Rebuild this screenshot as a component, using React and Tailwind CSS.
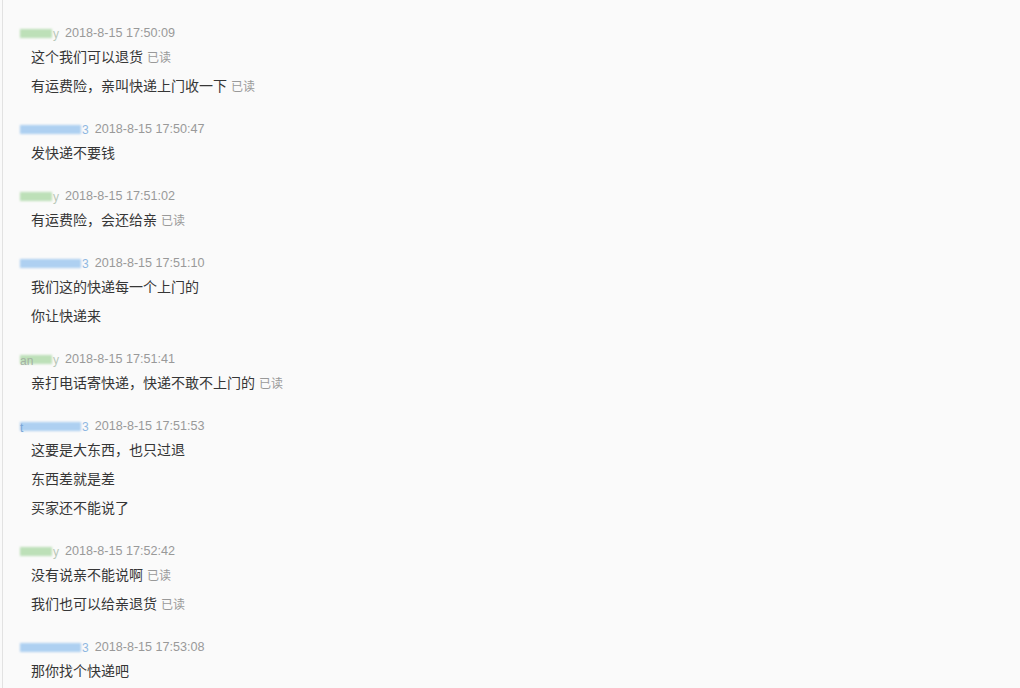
import React from "react";

const groups = [
  { who: "g", tail: "y", time: "2018-8-15 17:50:09", msgs: [["这个我们可以退货", true], ["有运费险，亲叫快递上门收一下", true]] },
  { who: "b", tail: "3", time: "2018-8-15 17:50:47", msgs: [["发快递不要钱", false]] },
  { who: "g", tail: "y", time: "2018-8-15 17:51:02", msgs: [["有运费险，会还给亲", true]] },
  { who: "b", tail: "3", time: "2018-8-15 17:51:10", msgs: [["我们这的快递每一个上门的", false], ["你让快递来", false]] },
  { who: "g", tail: "y", head: "an", time: "2018-8-15 17:51:41", msgs: [["亲打电话寄快递，快递不敢不上门的", true]] },
  { who: "b", tail: "3", head: "t", time: "2018-8-15 17:51:53", msgs: [["这要是大东西，也只过退", false], ["东西差就是差", false], ["买家还不能说了", false]] },
  { who: "g", tail: "y", time: "2018-8-15 17:52:42", msgs: [["没有说亲不能说啊", true], ["我们也可以给亲退货", true]] },
  { who: "b", tail: "3", time: "2018-8-15 17:53:08", msgs: [["那你找个快递吧", false]] },
];

const BlurName = ({ who, tail, head }) => {
  const green = who === "g";
  return (
    <div className="relative flex items-center h-[21px]">
      <div
        className={
          green
            ? "w-[32px] h-[9px] bg-[#bde0b8] blur-[1px]"
            : "w-[61px] h-[9px] bg-[#aed0f1] blur-[1px]"
        }
      />
      {head && (
        <span
          className={
            green
              ? "absolute left-0 top-[3px] text-[12px] text-[#a3b0a3] font-['Liberation_Sans',sans-serif]"
              : "absolute left-0 top-[3px] text-[12px] text-[#7aa6d6] font-['Liberation_Sans',sans-serif]"
          }
        >
          {head}
        </span>
      )}
      <span
        className={
          green
            ? "ml-[1px] text-[12px] text-[#b8c8b8] font-['Liberation_Sans',sans-serif]"
            : "ml-[1px] text-[12px] text-[#8fb8e2] font-['Liberation_Sans',sans-serif]"
        }
      >
        {tail}
      </span>
    </div>
  );
};

const App = () => {
  return (
    <div className="h-[688px] bg-[#fafafa] pl-[2px] overflow-hidden">
      <div className="h-full border-l border-[#e2e2e2] pt-[22px]">
        {groups.map((g, i) => (
          <div key={i} className="mb-[17px]">
            <div className="h-[21px] flex items-center pl-[17px] pt-[2px]">
              <BlurName who={g.who} tail={g.tail} head={g.head} />
              <span className="ml-[6px] text-[12.6px] text-[#999999] font-['Liberation_Sans',sans-serif]">
                {g.time}
              </span>
            </div>
            {g.msgs.map(([text, read], j) => (
              <div
                key={j}
                className="h-[29px] flex items-center pl-[28px] pb-[2px] text-[14px] text-[#363636] font-['Noto_Sans_CJK_SC',sans-serif]"
              >
                <span>{text}</span>
                {read && (
                  <span className="ml-[4px] text-[12px] text-[#999999]">已读</span>
                )}
              </div>
            ))}
          </div>
        ))}
      </div>
    </div>
  );
};

export default App;
